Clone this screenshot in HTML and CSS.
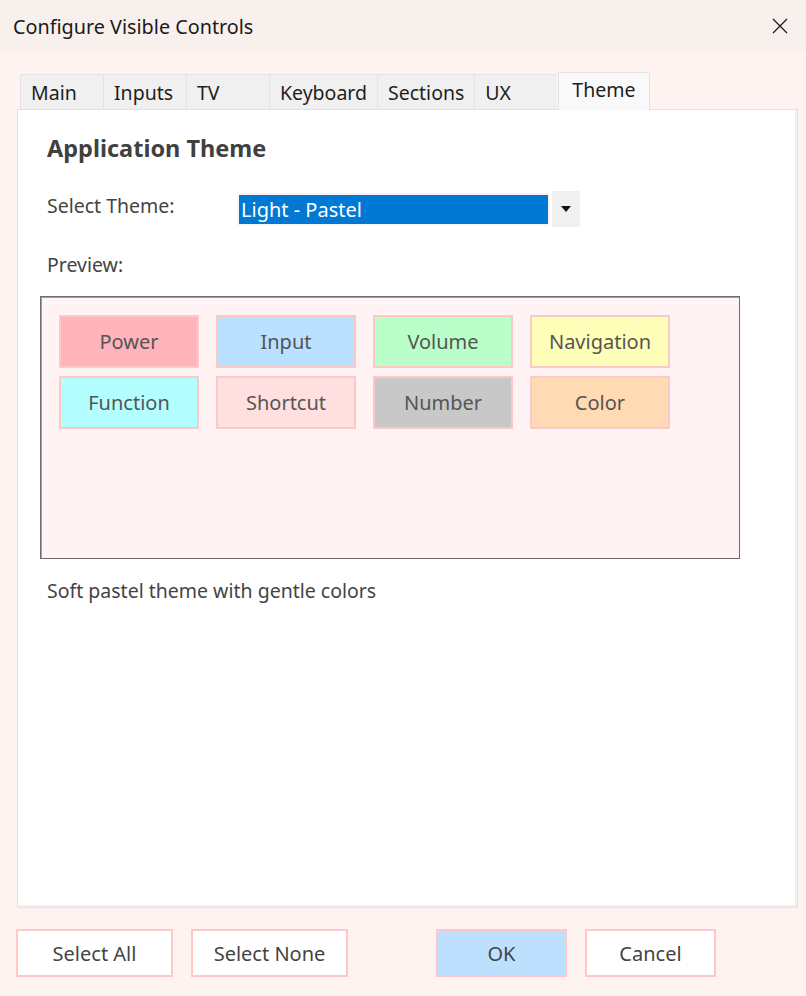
FILE: index.html
```html
<!DOCTYPE html>
<html lang="en">
<head>
    <meta charset="UTF-8">
    <meta name="viewport" content="width=device-width, initial-scale=1.0">
    <title>Configure Visible Controls</title>
    <link rel="stylesheet" href="styles.css">
</head>
<body>
    <div class="ventana">
        <!-- Barra de titulo -->
        <div class="titulo">
            <span>Configure Visible Controls</span>
            <svg class="cerrar" width="18" height="18" viewBox="0 0 18 18">
                <path d="M2 2 L16 16 M16 2 L2 16" stroke="#1a1a1a" stroke-width="1.3" fill="none"/>
            </svg>
        </div>

        <div class="cuerpo">
            <!-- Pestañas -->
            <div class="pestanas">
                <div class="pestana">Main</div>
                <div class="pestana">Inputs</div>
                <div class="pestana">TV</div>
                <div class="pestana">Keyboard</div>
                <div class="pestana">Sections</div>
                <div class="pestana">UX</div>
                <div class="pestana activa">Theme</div>
            </div>

            <div class="panel">
                <h2>Application Theme</h2>

                <div class="fila-tema">
                    <span class="etiqueta">Select Theme:</span>
                    <div class="combo">
                        <div class="combo-valor">Light - Pastel</div>
                        <div class="combo-flecha">
                            <svg width="10" height="6" viewBox="0 0 10 6"><path d="M0 0 H10 L5 6 Z" fill="#111"/></svg>
                        </div>
                    </div>
                </div>

                <p class="etiqueta preview-label">Preview:</p>

                <div class="preview">
                    <div class="muestra power">Power</div>
                    <div class="muestra input">Input</div>
                    <div class="muestra volume">Volume</div>
                    <div class="muestra navigation">Navigation</div>
                    <div class="muestra function">Function</div>
                    <div class="muestra shortcut">Shortcut</div>
                    <div class="muestra number">Number</div>
                    <div class="muestra color">Color</div>
                </div>

                <p class="descripcion">Soft pastel theme with gentle colors</p>
            </div>

            <!-- Botones inferiores -->
            <div class="botones">
                <button>Select All</button>
                <button>Select None</button>
                <button class="ok">OK</button>
                <button class="cancelar">Cancel</button>
            </div>
        </div>
    </div>
</body>
</html>
```

FILE: styles.css
```css
/* Estilos generales */
body {
    margin: 0;
    padding: 0;
    font-family: "Noto Sans", "Open Sans", sans-serif;
    background-color: #fff3f2;
    color: #444;
}

.ventana {
    width: 806px;
    height: 996px;
    display: flex;
    flex-direction: column;
}

/* Barra de titulo */
.titulo {
    height: 52px;
    background-color: #f8f0ec;
    display: flex;
    align-items: center;
    justify-content: space-between;
    padding: 0 17px 0 13px;
    font-size: 19.8px;
    color: #1a1a1a;
}

.cuerpo {
    flex: 1;
    padding: 19px 8px 0 17px;
    display: flex;
    flex-direction: column;
}

/* Pestañas */
.pestanas {
    display: flex;
    align-items: flex-end;
    padding-left: 3px;
    height: 38px;
    position: relative;
    z-index: 1;
}

.pestana {
    height: 34px;
    min-width: 62px;
    padding: 0 10px;
    background-color: #f0f0f0;
    border: 1px solid #e4e4e4;
    border-bottom: none;
    border-right: none;
    font-size: 19.5px;
    color: #1e1e1e;
    line-height: 36px;
}

.pestana.activa {
    height: 37px;
    line-height: 34px;
    background-color: #f9f9f9;
    border-right: 1px solid #e4e4e4;
    padding: 0 13px;
    min-width: 64px;
    margin-left: 1px;
    margin-bottom: -1px;
}

.panel {
    background-color: #ffffff;
    border: 1px solid #e2e2e2;
    box-shadow: inset -2px -2px 0 #f0f0f0;
    padding: 0 0 0 29px;
    box-sizing: border-box;
    height: 799px;
}

.panel h2 {
    margin: 22px 0 0;
    font-size: 23.5px;
    font-weight: bold;
    color: #404040;
    line-height: 32px;
}

.etiqueta {
    font-size: 19.5px;
    color: #444;
}

.fila-tema {
    display: flex;
    align-items: flex-start;
    margin-top: 27px;
}

.fila-tema .etiqueta {
    width: 190px;
    margin-top: 1px;
}

.combo {
    display: flex;
    align-items: center;
}

.combo-valor {
    width: 307px;
    height: 29px;
    background-color: #0078d4;
    border: 2px solid #fff3f2;
    color: #fff;
    font-size: 20px;
    line-height: 29px;
    padding-left: 2px;
}

.combo-flecha {
    width: 28px;
    height: 36px;
    margin-left: 2px;
    background-color: #f0f0f0;
    display: flex;
    align-items: center;
    justify-content: center;
}

.preview-label {
    margin: 24px 0 0;
    line-height: 28px;
}

/* Vista previa */
.preview {
    width: 700px;
    height: 263px;
    box-sizing: border-box;
    margin: 17px 0 0 -7px;
    border: 1px solid #6e6e6e;
    box-shadow: inset 1px 1px 0 #a0a0a0;
    background-color: #fff3f3;
    padding: 18px 0 0 18px;
    display: grid;
    grid-template-columns: repeat(4, 140px);
    grid-auto-rows: 53px;
    column-gap: 17px;
    row-gap: 8px;
    align-content: start;
}

.muestra {
    border: 2px solid #ffc8c8;
    display: flex;
    align-items: center;
    justify-content: center;
    font-size: 20px;
    color: #555;
}

.power { background-color: #ffb3ba; }
.input { background-color: #bae1ff; }
.volume { background-color: #baffc9; }
.navigation { background-color: #ffffba; }
.function { background-color: #b3ffff; }
.shortcut { background-color: #ffdfe0; }
.number { background-color: #c8c8c8; }
.color { background-color: #ffdab3; }

.descripcion {
    margin: 18px 0 0;
    font-size: 19.5px;
    color: #444;
}

/* Botones inferiores */
.botones {
    display: flex;
    margin-top: 21px;
    margin-left: -1px;
}

.botones button {
    width: 157px;
    height: 48px;
    background-color: #fff;
    border: 2px solid #ffc8c8;
    font-family: inherit;
    font-size: 20px;
    color: #444;
    margin-right: 18px;
}

.botones .ok {
    width: 131px;
    margin-left: 70px;
    background-color: #bde0ff;
}

.botones .cancelar {
    width: 131px;
}
```
